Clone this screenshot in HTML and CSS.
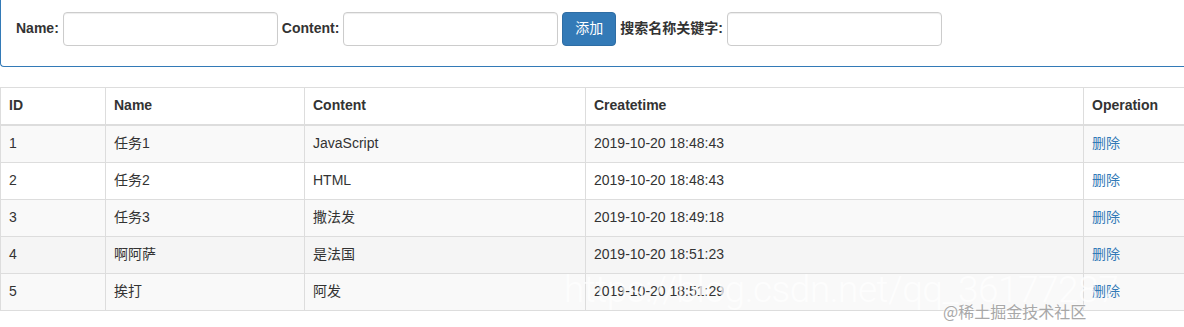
FILE: index.html
```html
<!DOCTYPE html>
<html lang="zh-CN">
<head>
    <meta charset="UTF-8">
    <meta name="viewport" content="width=device-width, initial-scale=1.0">
    <title>任务列表</title>
    <link rel="stylesheet" href="styles.css">
</head>
<body>
    <div class="panel">
        <div class="panel-body">
            <form class="form-inline">
                <label for="name">Name:</label>
                <input type="text" id="name" class="form-control">
                <label for="content">Content:</label>
                <input type="text" id="content" class="form-control">
                <button type="button" class="btn btn-primary">添加</button>
                <label for="keywords">搜索名称关键字:</label>
                <input type="text" id="keywords" class="form-control">
            </form>
        </div>
    </div>

    <div class="table-wrap">
        <table class="table">
            <colgroup>
                <col class="col-id">
                <col class="col-name">
                <col class="col-content">
                <col class="col-time">
                <col>
            </colgroup>
            <thead>
                <tr>
                    <th>ID</th>
                    <th>Name</th>
                    <th>Content</th>
                    <th>Createtime</th>
                    <th>Operation</th>
                </tr>
            </thead>
            <tbody>
                <tr>
                    <td>1</td>
                    <td>任务1</td>
                    <td>JavaScript</td>
                    <td>2019-10-20 18:48:43</td>
                    <td><a href="#">删除</a></td>
                </tr>
                <tr>
                    <td>2</td>
                    <td>任务2</td>
                    <td>HTML</td>
                    <td>2019-10-20 18:48:43</td>
                    <td><a href="#">删除</a></td>
                </tr>
                <tr>
                    <td>3</td>
                    <td>任务3</td>
                    <td>撒法发</td>
                    <td>2019-10-20 18:49:18</td>
                    <td><a href="#">删除</a></td>
                </tr>
                <tr class="hover">
                    <td>4</td>
                    <td>啊阿萨</td>
                    <td>是法国</td>
                    <td>2019-10-20 18:51:23</td>
                    <td><a href="#">删除</a></td>
                </tr>
                <tr>
                    <td>5</td>
                    <td>挨打</td>
                    <td>阿发</td>
                    <td>2019-10-20 18:51:29</td>
                    <td><a href="#">删除</a></td>
                </tr>
            </tbody>
        </table>
        <div class="watermark">https://blog.csdn.net/qq_36177287</div>
        <div class="credit">@稀土掘金技术社区</div>
    </div>
</body>
</html>
```

FILE: styles.css
```css
body {
    margin: 0;
    font-family: 'Liberation Sans', Arial, 'Noto Sans CJK SC', sans-serif;
    font-size: 14px;
    line-height: 1.42857;
    color: #333;
    background: #fff;
    overflow: hidden;
}

.panel {
    border: 1px solid #337ab7;
    border-top: none;
    border-right: none;
    border-radius: 0 0 0 4px;
    margin-bottom: 20px;
}

.panel-body {
    padding: 12px 15px 20px;
}

.form-inline {
    display: flex;
    align-items: center;
    gap: 4px;
    margin: 0;
}

.form-inline label {
    font-weight: bold;
}

.form-control {
    box-sizing: border-box;
    width: 215px;
    height: 34px;
    padding: 6px 12px;
    font: inherit;
    color: #555;
    background: #fff;
    border: 1px solid #ccc;
    border-radius: 4px;
    box-shadow: inset 0 1px 1px rgba(0, 0, 0, 0.075);
}

.btn {
    height: 34px;
    padding: 6px 12px;
    font: inherit;
    border: 1px solid transparent;
    border-radius: 4px;
    cursor: pointer;
}

.btn-primary {
    color: #fff;
    background-color: #337ab7;
    border-color: #2e6da4;
}

.table-wrap {
    position: relative;
    height: 240px;
}

.table {
    width: 1200px;
    table-layout: fixed;
    border-collapse: collapse;
    border-spacing: 0;
}

.col-id { width: 105px; }
.col-name { width: 199px; }
.col-content { width: 281px; }
.col-time { width: 498px; }

.table th,
.table td {
    padding: 8px;
    text-align: left;
    border: 1px solid #ddd;
    white-space: nowrap;
}

.table thead th {
    border-bottom-width: 2px;
}

.table tbody tr:nth-child(odd) {
    background-color: #f9f9f9;
}

.table tbody tr.hover {
    background-color: #f5f5f5;
}

.table a {
    color: #337ab7;
    text-decoration: none;
}

.watermark {
    position: absolute;
    left: 564px;
    top: 181px;
    font-family: Roboto, sans-serif;
    font-weight: 300;
    font-size: 37px;
    line-height: 44px;
    letter-spacing: -0.5px;
    color: rgba(255, 255, 255, 0.75);
    white-space: nowrap;
    pointer-events: none;
}

.credit {
    position: absolute;
    left: 943px;
    top: 213px;
    font-family: 'Noto Sans CJK SC', serif;
    font-size: 16px;
    line-height: 22px;
    color: #a8a8a8;
    text-shadow: 0 0 2px #fff, 0 0 2px #fff;
    white-space: nowrap;
    pointer-events: none;
}
```
